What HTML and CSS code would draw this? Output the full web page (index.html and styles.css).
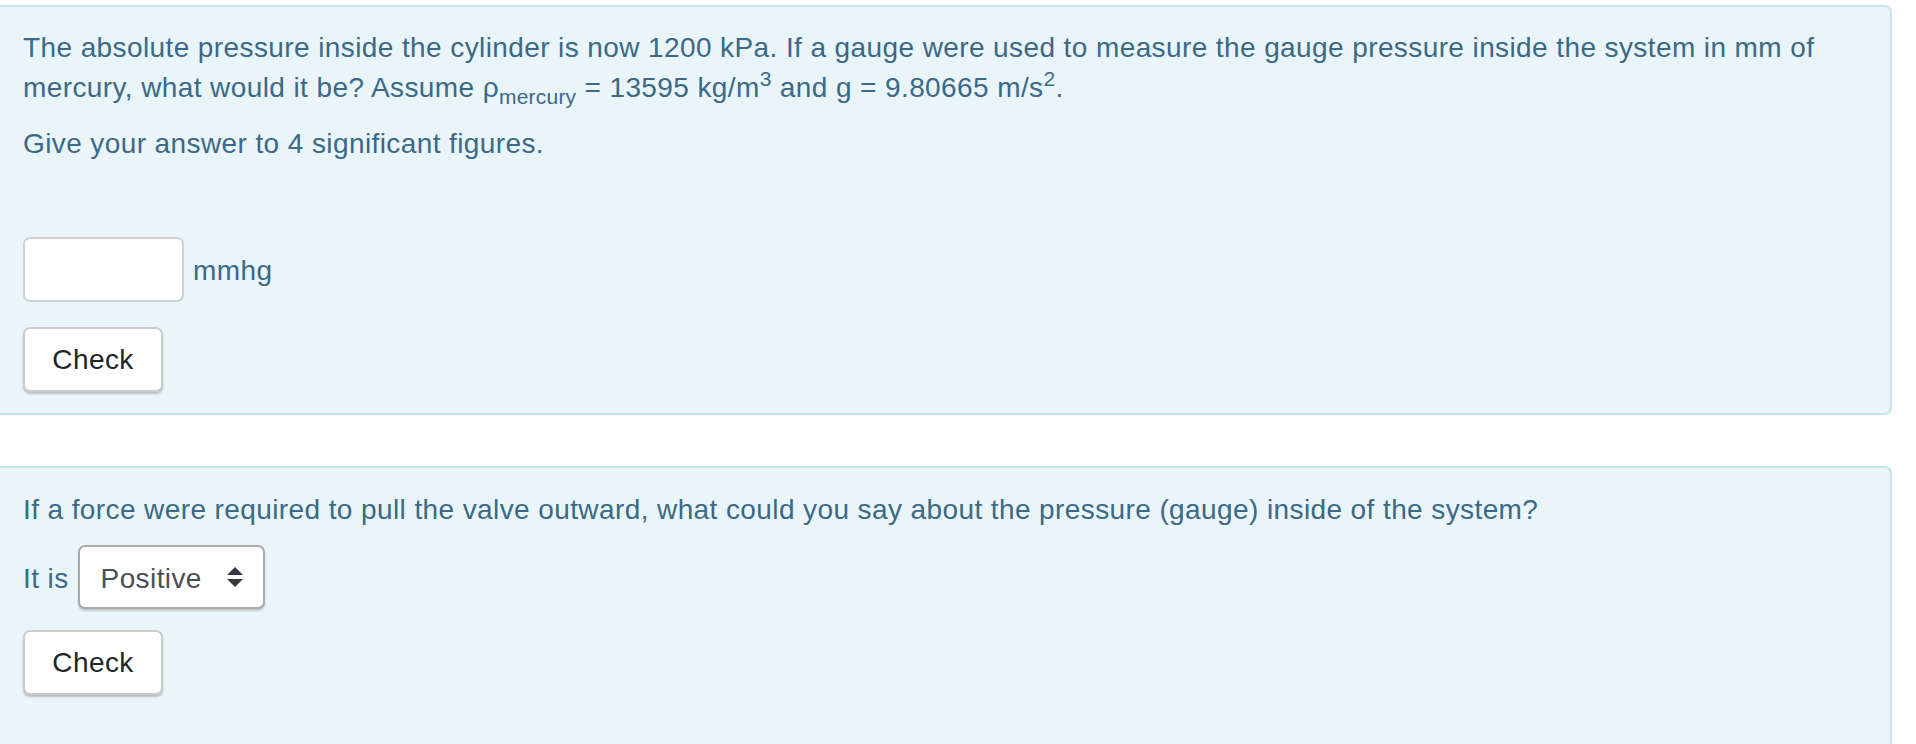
FILE: index.html
```html
<!DOCTYPE html>
<html lang="en">
<head>
<meta charset="utf-8">
<title>Question</title>
<link rel="stylesheet" href="styles.css">
</head>
<body>
<div class="page">
  <div class="card">
    <p class="text">The absolute pressure inside the cylinder is now 1200 kPa. If a gauge were used to measure the gauge pressure inside the system in mm of mercury, what would it be? Assume ρ<sub>mercury</sub> = 13595 kg/m<sup>3</sup> and g = 9.80665 m/s<sup>2</sup>.</p>
    <p class="text">Give your answer to 4 significant figures.</p>
    <div class="answer-row">
      <input class="answer" type="text" aria-label="Answer">
      <span class="unit">mmhg</span>
    </div>
    <button class="btn">Check</button>
  </div>

  <div class="card card-second">
    <p class="text">If a force were required to pull the valve outward, what could you say about the pressure (gauge) inside of the system?</p>
    <div class="select-row">
      <span class="label">It is</span>
      <div class="select">
        <span class="select-value">Positive</span>
        <svg class="select-arrow" width="16" height="20" viewBox="0 0 16 20" aria-hidden="true">
          <path d="M8 0 L16 8 L0 8 Z" fill="#343a40"/>
          <path d="M0 12 L16 12 L8 20 Z" fill="#343a40"/>
        </svg>
      </div>
    </div>
    <button class="btn btn-second">Check</button>
  </div>
</div>
</body>
</html>
```

FILE: styles.css
```css
html, body {
  margin: 0;
  padding: 0;
  background: #ffffff;
}

body {
  font-family: "Liberation Sans", Arial, Helvetica, sans-serif;
  font-size: 28px;
  line-height: 40px;
  letter-spacing: 0.4px;
  color: #3b6987;
  overflow: hidden;
}

.page {
  padding-top: 5px;
  display: flex;
  flex-direction: column;
  gap: 51px;
}

.card {
  margin: 0 24px 0 -6px;
  padding: 21px 24px 21px 27px;
  background: #e9f5f8;
  border: 2px solid #c6e3eb;
  border-radius: 7px;
  display: flex;
  flex-direction: column;
  align-items: flex-start;
}

.card-second {
  padding-top: 22px;
  padding-bottom: 60px;
}

.text {
  margin: 0 0 16px 0;
}

.text sub,
.text sup {
  font-size: 21px;
  line-height: 0;
  letter-spacing: 0.2px;
}

.text sub {
  vertical-align: -7px;
}

.text sup {
  vertical-align: 11px;
}

.answer-row {
  margin-top: 57px;
  display: flex;
  align-items: center;
  gap: 9px;
}

.answer {
  box-sizing: border-box;
  width: 161px;
  height: 65px;
  margin: 0;
  border: 2px solid #cfd2d4;
  border-radius: 7px;
  background: #ffffff;
  font: inherit;
  padding: 0 12px;
}

.unit {
  padding-top: 2px;
}

.btn {
  box-sizing: border-box;
  margin-top: 25px;
  width: 140px;
  height: 65px;
  padding: 0;
  background: #ffffff;
  border: 2px solid #cccccc;
  border-radius: 7px;
  box-shadow: 0 2px 2px rgba(0, 0, 0, 0.22);
  font-family: "Liberation Sans", Arial, Helvetica, sans-serif;
  font-size: 28px;
  letter-spacing: 0.4px;
  color: #212529;
  text-align: center;
}

.btn-second {
  margin-top: 21px;
}

.select-row {
  display: flex;
  align-items: center;
  gap: 9px;
  margin-top: -1px;
}

.label {
  padding-top: 4px;
}

.select {
  box-sizing: border-box;
  width: 187px;
  height: 64px;
  border: 2px solid #aaaaaa;
  border-radius: 7px;
  background: #ffffff;
  box-shadow: 0 2px 2px rgba(0, 0, 0, 0.18);
  display: flex;
  align-items: center;
  justify-content: space-between;
  padding: 0 20px 0 21px;
}

.select-value {
  color: #495057;
  padding-top: 4px;
}

.select-arrow {
  display: block;
}
```
